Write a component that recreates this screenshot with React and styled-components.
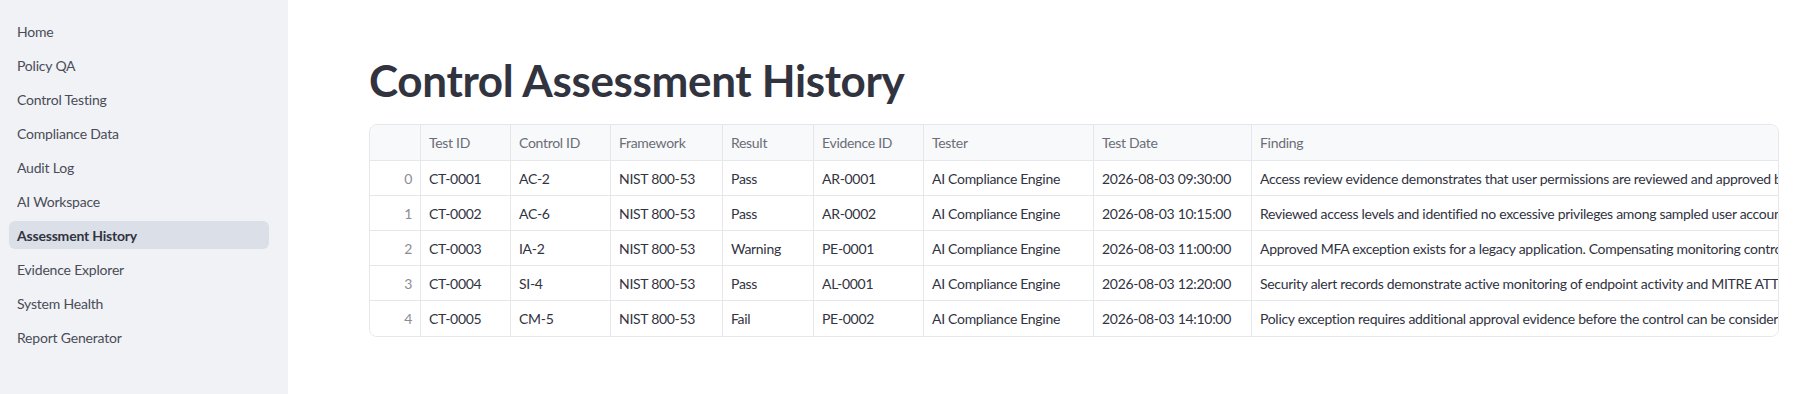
import React from "react";
import styled, { createGlobalStyle } from "styled-components";

const GlobalStyle = createGlobalStyle`
  html, body { margin: 0; padding: 0; background: #ffffff; }
  body { font-family: Lato, "Liberation Sans", sans-serif; color: #31333f; }
  * { box-sizing: border-box; }
`;

const Shell = styled.div`
  display: flex;
  min-height: 394px;
  width: 1810px;
`;

const Sidebar = styled.nav`
  flex: 0 0 288px;
  width: 288px;
  background: #f0f2f6;
  padding: 17px 19px 0 9px;
  display: flex;
  flex-direction: column;
  gap: 6px;
`;

const NavItem = styled.a`
  display: flex;
  align-items: center;
  height: 28px;
  padding: 0 8px;
  border-radius: 6px;
  font-size: 14px;
  letter-spacing: -0.2px;
  text-decoration: none;
  color: ${(p) => (p.$active ? "#31333f" : "#4a4c56")};
  font-weight: ${(p) => (p.$active ? 700 : 400)};
  background: ${(p) => (p.$active ? "#dadfe8" : "transparent")};
  cursor: pointer;
`;

const Main = styled.main`
  flex: 1;
  min-width: 0;
  padding: 54px 31px 0 81px;
`;

const Title = styled.h1`
  margin: 0 0 18px 0;
  font-size: 44px;
  line-height: 52px;
  font-weight: 700;
  color: #31333f;
  letter-spacing: -0.35px;
`;

const Grid = styled.div`
  width: 1410px;
  border: 1px solid #e6e7ea;
  border-radius: 8px;
  overflow: hidden;
  font-size: 14px;
  letter-spacing: -0.3px;
`;

const Row = styled.div`
  display: grid;
  grid-template-columns: 51px 90px 100px 112px 91px 110px 170px 158px 1fr;
  height: ${(p) => (p.$header ? "36px" : "35px")};
  background: ${(p) => (p.$header ? "#f8f9fb" : "#ffffff")};
  border-bottom: ${(p) => (p.$last ? "none" : "1px solid #e6e7ea")};
`;

const Cell = styled.div`
  display: flex;
  align-items: center;
  justify-content: ${(p) => (p.$index ? "flex-end" : "flex-start")};
  padding: 0 8px;
  border-right: ${(p) => (p.$last ? "none" : "1px solid #e6e7ea")};
  white-space: nowrap;
  overflow: hidden;
  color: ${(p) => (p.$header ? "#6b6d76" : p.$index ? "#8b8d95" : "#31333f")};
`;

const navItems = [
  "Home",
  "Policy QA",
  "Control Testing",
  "Compliance Data",
  "Audit Log",
  "AI Workspace",
  "Assessment History",
  "Evidence Explorer",
  "System Health",
  "Report Generator",
];

const columns = ["", "Test ID", "Control ID", "Framework", "Result", "Evidence ID", "Tester", "Test Date", "Finding"];

const rows = [
  ["CT-0001", "AC-2", "NIST 800-53", "Pass", "AR-0001", "AI Compliance Engine", "2026-08-03 09:30:00", "Access review evidence demonstrates that user permissions are reviewed and approved by management."],
  ["CT-0002", "AC-6", "NIST 800-53", "Pass", "AR-0002", "AI Compliance Engine", "2026-08-03 10:15:00", "Reviewed access levels and identified no excessive privileges among sampled user accounts."],
  ["CT-0003", "IA-2", "NIST 800-53", "Warning", "PE-0001", "AI Compliance Engine", "2026-08-03 11:00:00", "Approved MFA exception exists for a legacy application. Compensating monitoring controls are in place."],
  ["CT-0004", "SI-4", "NIST 800-53", "Pass", "AL-0001", "AI Compliance Engine", "2026-08-03 12:20:00", "Security alert records demonstrate active monitoring of endpoint activity and MITRE ATT&CK mapping."],
  ["CT-0005", "CM-5", "NIST 800-53", "Fail", "PE-0002", "AI Compliance Engine", "2026-08-03 14:10:00", "Policy exception requires additional approval evidence before the control can be considered effective."],
];

export default function App() {
  return (
    <>
      <GlobalStyle />
      <Shell>
        <Sidebar>
          {navItems.map((item) => (
            <NavItem key={item} $active={item === "Assessment History"}>
              {item}
            </NavItem>
          ))}
        </Sidebar>
        <Main>
          <Title>Control Assessment History</Title>
          <Grid>
            <Row $header>
              {columns.map((c, i) => (
                <Cell key={i} $header $last={i === columns.length - 1}>
                  {c}
                </Cell>
              ))}
            </Row>
            {rows.map((r, ri) => (
              <Row key={ri} $last={ri === rows.length - 1}>
                <Cell $index>{ri}</Cell>
                {r.map((v, ci) => (
                  <Cell key={ci} $last={ci === r.length - 1}>
                    {v}
                  </Cell>
                ))}
              </Row>
            ))}
          </Grid>
        </Main>
      </Shell>
    </>
  );
}
